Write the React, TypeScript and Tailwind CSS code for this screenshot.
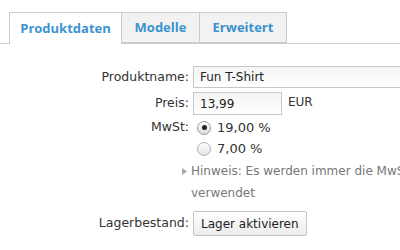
import React from 'react';

const App = () => {
  return <div className="w-[400px] h-[250px] overflow-hidden bg-white">
      {/* Tabs */}
      <div className="flex pt-[12px] pl-[9px] border-b border-[#cccccc] h-[44px] font-['Open_Sans',sans-serif] font-bold text-[13px] text-[#3c93cf]">
        <div className="w-[113px] h-[32px] border border-b-0 border-[#cccccc] bg-white -mb-px flex items-center justify-center">
          Produktdaten
        </div>
        <div className="w-[78px] h-[31px] border border-l-0 border-[#cccccc] bg-[#f2f2f2] flex items-center justify-center">
          Modelle
        </div>
        <div className="w-[87px] h-[31px] border border-l-0 border-[#cccccc] bg-[#f2f2f2] flex items-center justify-center">
          Erweitert
        </div>
      </div>
      {/* Form */}
      <div className="grid grid-cols-[189px_1fr] gap-x-[4px] mt-[21px] font-['DejaVu_Sans',sans-serif] text-[12.5px] text-[#333333]">
        <div className="h-[22px] mt-[1px] flex items-center justify-end">Produktname:</div>
        <div className="h-[22px] mt-[1px]">
          <div className="h-[22px] w-[260px] border border-[#c8c8c8] bg-gradient-to-b from-[#f4f4f4] to-white flex items-center pl-[6px] text-[12px] text-[#222]">Fun T-Shirt</div>
        </div>

        <div className="h-[23px] mt-[4px] flex items-center justify-end">Preis:</div>
        <div className="h-[23px] mt-[4px] flex items-start gap-[6px]">
          <div className="h-[23px] w-[89px] border border-[#c8c8c8] bg-gradient-to-b from-[#f4f4f4] to-white flex items-center pl-[6px] text-[12px] text-[#222]">13,99</div>
          <span className="text-[12px] mt-[1px]">EUR</span>
        </div>

        <div className="h-[21px] mt-[2px] flex items-center justify-end">MwSt:</div>
        <div className="h-[21px] mt-[2px] flex items-center">
          <span className="w-[14px] h-[14px] ml-[4px] rounded-full border border-[#9a9a9a] bg-gradient-to-b from-white to-[#dcdcdc] flex items-center justify-center">
            <span className="w-[5px] h-[5px] rounded-full bg-[#222]" />
          </span>
          <span className="ml-[6px] text-[13px]">19,00 %</span>
        </div>

        <div />
        <div className="h-[21px] flex items-center">
          <span className="w-[14px] h-[14px] ml-[4px] rounded-full border border-[#b0b0b0] bg-gradient-to-b from-white to-[#e4e4e4]" />
          <span className="ml-[6px] text-[13px]">7,00 %</span>
        </div>

        <div />
        <div className="-ml-[11px] mt-[2px] text-[#777777] text-[12px] leading-[21px]">
          <div className="flex items-center whitespace-nowrap">
            <svg width="5" height="7" viewBox="0 0 5 7" className="mr-[4px]"><path d="M0 0 L5 3.5 L0 7 Z" fill="#aaaaaa" /></svg>
            Hinweis: Es werden immer die MwSt-Sätze aus den Ländereinstellungen
          </div>
          <div className="pl-[9px] mt-[1px]">verwendet</div>
        </div>

        <div className="h-[25px] mt-[7px] flex items-center justify-end">Lagerbestand:</div>
        <div className="h-[25px] mt-[7px]">
          <button className="h-[25px] px-[7px] border border-[#c4c4c4] rounded-[2px] bg-gradient-to-b from-white to-[#ececec] text-[12px] text-[#222]">Lager aktivieren</button>
        </div>
      </div>
    </div>;
};
export default App;
